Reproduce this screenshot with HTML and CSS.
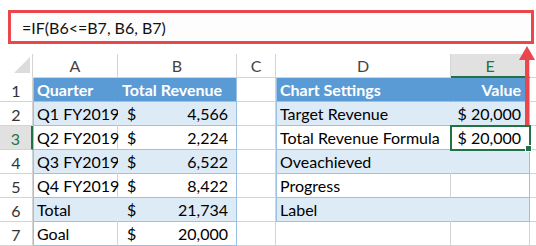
FILE: index.html
```html
<!DOCTYPE html>
<html lang="en">
<head>
    <meta charset="UTF-8">
    <title>Chart Settings</title>
    <link rel="stylesheet" href="styles.css">
</head>
<body>
    <div class="formula-bar">=IF(B6&lt;=B7, B6, B7)</div>
    <div class="sheet">
        <!-- column headers -->
        <div class="corner"><span class="corner-mark"></span></div>
        <div class="col-head">A</div>
        <div class="col-head">B</div>
        <div class="col-head">C</div>
        <div class="col-head">D</div>
        <div class="col-head active">E</div>
        <div class="col-head"></div>

        <!-- row 1 -->
        <div class="row-head">1</div>
        <div class="cell head first">Quarter</div>
        <div class="cell head last">Total Revenue</div>
        <div class="cell"></div>
        <div class="cell head first">Chart Settings</div>
        <div class="cell head last num">Value</div>
        <div class="cell"></div>

        <!-- row 2 -->
        <div class="row-head">2</div>
        <div class="cell band first">Q1 FY2019</div>
        <div class="cell band last money"><span>$</span><span>4,566</span></div>
        <div class="cell"></div>
        <div class="cell band first">Target Revenue</div>
        <div class="cell band last num">$ 20,000</div>
        <div class="cell"></div>

        <!-- row 3 -->
        <div class="row-head active">3</div>
        <div class="cell plain first">Q2 FY2019</div>
        <div class="cell plain last money"><span>$</span><span>2,224</span></div>
        <div class="cell"></div>
        <div class="cell plain first">Total Revenue Formula</div>
        <div class="cell plain last num selected">$ 20,000</div>
        <div class="cell"></div>

        <!-- row 4 -->
        <div class="row-head">4</div>
        <div class="cell band first">Q3 FY2019</div>
        <div class="cell band last money"><span>$</span><span>6,522</span></div>
        <div class="cell"></div>
        <div class="cell band first">Oveachieved</div>
        <div class="cell band last"></div>
        <div class="cell"></div>

        <!-- row 5 -->
        <div class="row-head">5</div>
        <div class="cell plain first">Q4 FY2019</div>
        <div class="cell plain last money"><span>$</span><span>8,422</span></div>
        <div class="cell"></div>
        <div class="cell plain first">Progress</div>
        <div class="cell plain last"></div>
        <div class="cell"></div>

        <!-- row 6 -->
        <div class="row-head">6</div>
        <div class="cell band first">Total</div>
        <div class="cell band last money"><span>$</span><span>21,734</span></div>
        <div class="cell"></div>
        <div class="cell band first">Label</div>
        <div class="cell band last"></div>
        <div class="cell"></div>

        <!-- row 7 -->
        <div class="row-head">7</div>
        <div class="cell plain first">Goal</div>
        <div class="cell plain last money"><span>$</span><span>20,000</span></div>
        <div class="cell"></div>
        <div class="cell"></div>
        <div class="cell"></div>
        <div class="cell"></div>
    </div>

    <svg class="arrow" width="18" height="84" viewBox="0 0 18 84">
        <polygon points="9,2 1,16 17,16" fill="#e9474b"/>
        <rect x="7" y="15" width="4" height="67" fill="#e9474b"/>
    </svg>
</body>
</html>
```

FILE: styles.css
```css
body {
    margin: 0;
    background: #fff;
    font-family: Lato, "Open Sans", sans-serif;
    font-size: 16px;
    color: #000;
    width: 536px;
    height: 246px;
    overflow: hidden;
    position: relative;
}
.formula-bar {
    box-sizing: border-box;
    margin: 10px 2px 0 8px;
    height: 34px;
    border: 3px solid #e9474b;
    background: #fdfdfd;
    padding: 4px 0 0 11px;
    line-height: 22px;
    color: #111;
}
.sheet {
    margin-top: 10px;
    display: grid;
    grid-template-columns: 33px 85px 119px 39px 175px 79px 1fr;
    grid-auto-rows: 24px;
}
.sheet > div {
    box-sizing: border-box;
    border-right: 1px solid #d4d4d4;
    border-bottom: 1px solid #d4d4d4;
}
.corner {
    display: flex;
    align-items: flex-end;
    justify-content: flex-end;
    padding: 0 2px 4px 0;
    border-bottom-color: transparent !important;
}
.corner-mark {
    width: 0;
    height: 0;
    border-left: 16px solid transparent;
    border-bottom: 16px solid #dcdcdc;
}
.col-head {
    text-align: center;
    line-height: 24px;
    color: #444;
    background: #fff;
}
.col-head.active {
    background: #e1e1e1;
    color: #217346;
    border-bottom: 2px solid #217346 !important;
    line-height: 23px;
}
.row-head {
    text-align: center;
    line-height: 25px;
    color: #333;
}
.row-head.active {
    background: #e1e1e1;
    color: #217346;
    border-right: 2px solid #217346 !important;
}
.cell {
    display: flex;
    align-items: flex-end;
    padding: 0 4px 1px;
    line-height: 20px;
    white-space: nowrap;
    position: relative;
}
.cell.head {
    background: #5b9bd5;
    color: #fff;
    font-weight: bold;
    border-right-color: #5b9bd5;
    border-bottom-color: #9bc2e6;
}
.cell.band {
    background: #ddebf7;
    border-right-color: #ddebf7;
    border-bottom-color: #9bc2e6;
}
.cell.plain {
    border-bottom-color: #9bc2e6;
}
.cell.first {
    box-shadow: inset 1px 0 0 #9bc2e6;
}
.cell.last {
    border-right-color: #9bc2e6;
}
.cell.num {
    justify-content: flex-end;
    padding-right: 8px;
}
.cell.money {
    justify-content: space-between;
    padding: 0 8px 1px 9px;
}
.cell.selected {
    outline: 2px solid #217346;
    outline-offset: -1px;
    z-index: 1;
}
.cell.selected::after {
    content: "";
    position: absolute;
    right: -3px;
    bottom: -3px;
    width: 5px;
    height: 5px;
    background: #217346;
    border: 1px solid #fff;
}
.arrow {
    position: absolute;
    left: 518px;
    top: 44px;
}
```
